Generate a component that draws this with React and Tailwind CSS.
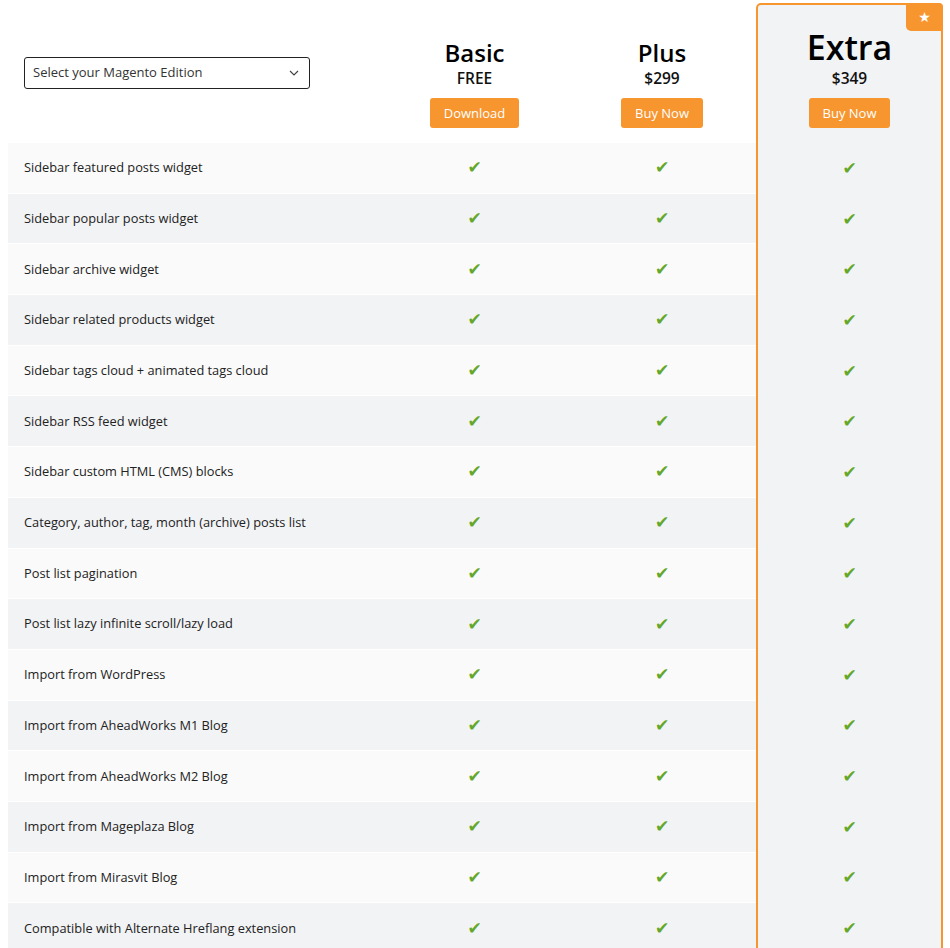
import React from "react";

const features = [
  "Sidebar featured posts widget",
  "Sidebar popular posts widget",
  "Sidebar archive widget",
  "Sidebar related products widget",
  "Sidebar tags cloud + animated tags cloud",
  "Sidebar RSS feed widget",
  "Sidebar custom HTML (CMS) blocks",
  "Category, author, tag, month (archive) posts list",
  "Post list pagination",
  "Post list lazy infinite scroll/lazy load",
  "Import from WordPress",
  "Import from AheadWorks M1 Blog",
  "Import from AheadWorks M2 Blog",
  "Import from Mageplaza Blog",
  "Import from Mirasvit Blog",
  "Compatible with Alternate Hreflang extension",
  "Compatible with Accelerated Mobile Pages",
];

function Check() {
  return (
    <span className="text-[17px] leading-none text-[#64a82b] font-['DejaVu_Sans',sans-serif]">
      ✔
    </span>
  );
}

function PlanHead({ title, price, action, big }) {
  return (
    <div className="flex flex-col items-center justify-end h-full pb-[15px]">
      <div
        className={
          big
            ? "text-[34px] leading-[36px] mb-[3px] font-semibold text-black"
            : "text-[24px] leading-[30px] font-semibold text-black"
        }
      >
        {title}
      </div>
      <div className="text-[15.5px] leading-[20px] font-semibold text-[#111]">{price}</div>
      <button className="mt-[10px] h-[30px] pt-[2px] px-[14px] rounded-[3px] bg-[#f7952f] text-white text-[13px] font-medium">
        {action}
      </button>
    </div>
  );
}

export default function App() {
  return (
    <div className="bg-white min-h-screen pt-[3px] font-['Open_Sans',sans-serif] text-[#333]">
      <div className="ml-2 w-[935px]">
        {/* header */}
        <div className="flex h-[140px]">
          <div className="w-[373px] flex items-center pl-4 pb-[1px]">
            <div className="w-[286px] h-[32px] border border-[#222] rounded-[3px] flex items-center justify-between pl-2 pr-[10px] text-[13px] text-[#333]">
              <span>Select your Magento Edition</span>
              <svg width="10" height="6" viewBox="0 0 10 6" fill="none">
                <path d="M1 1l4 4 4-4" stroke="#444" strokeWidth="1.2" />
              </svg>
            </div>
          </div>
          <div className="w-[187px]">
            <PlanHead title="Basic" price="FREE" action="Download" />
          </div>
          <div className="w-[188px]">
            <PlanHead title="Plus" price="$299" action="Buy Now" />
          </div>
          <div className="relative w-[187px] bg-[#f2f3f5] border-t-2 border-x-2 border-[#f7952f] rounded-t-[5px]">
            <div className="absolute top-[-2px] right-[-2px] w-[37px] h-[28px] bg-[#f7952f] rounded-bl-[5px] rounded-tr-[4px] flex items-center justify-center text-white text-[14px] font-['DejaVu_Sans',sans-serif]">
              ★
            </div>
            <PlanHead title="Extra" price="$349" action="Buy Now" big />
          </div>
        </div>

        {/* rows */}
        {features.map((f, i) => (
          <div key={f} className="flex h-[50.7px]">
            <div
              className={
                "flex w-[748px] border-b border-white " +
                (i % 2 === 0 ? "bg-[#fafafa]" : "bg-[#f2f3f5]")
              }
            >
              <div className="w-[373px] flex items-center pl-4 text-[12.8px] text-[#222]">{f}</div>
              <div className="w-[187px] flex items-center justify-center">
                <Check />
              </div>
              <div className="w-[188px] flex items-center justify-center">
                <Check />
              </div>
            </div>
            <div className="w-[187px] bg-[#f2f3f5] border-x-2 border-[#f7952f] flex items-center justify-center">
              <Check />
            </div>
          </div>
        ))}
      </div>
    </div>
  );
}
